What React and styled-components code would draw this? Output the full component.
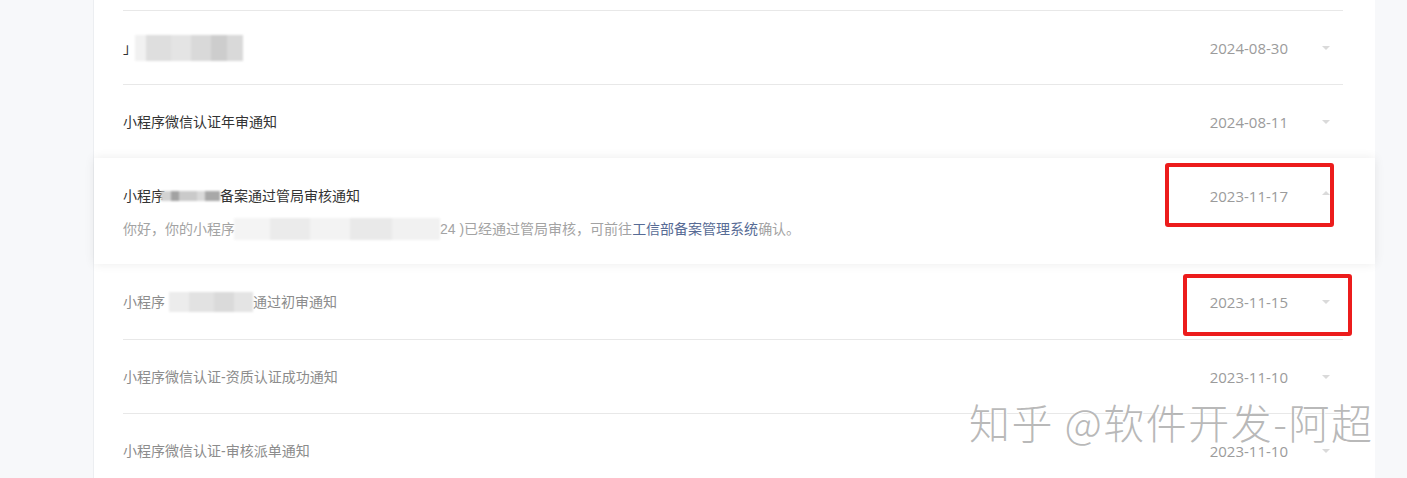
import React from "react";
import styled, { createGlobalStyle } from "styled-components";

const GlobalStyle = createGlobalStyle`
  html, body {
    margin: 0;
    padding: 0;
    background: #f7f8fa;
  }
  body {
    font-family: "Liberation Sans", "Noto Sans CJK SC", sans-serif;
    overflow: hidden;
  }
`;

const Page = styled.div`
  position: relative;
  width: 1407px;
  height: 478px;
  padding-left: 93px;
  box-sizing: border-box;
  overflow: hidden;
`;

const Panel = styled.div`
  width: 1282px;
  height: 100%;
  padding-top: 10px;
  box-sizing: border-box;
  background: #fff;
  border-left: 1px solid #eceef1;
`;

const List = styled.ul`
  list-style: none;
  margin: 0;
  padding: 0;
`;

const Item = styled.li`
  display: flex;
  align-items: center;
  height: ${(p) => p.$h || 74}px;
  margin: 0 32px 0 29px;
  box-sizing: border-box;
  border-top: ${(p) => (p.$line ? "1px solid #e8e8e8" : "none")};
`;

const ActiveItem = styled.li`
  position: relative;
  z-index: 1;
  height: 106px;
  padding: 28px 32px 26px 29px;
  box-sizing: border-box;
  background: #fff;
  box-shadow: 0 0 10px rgba(0, 0, 0, 0.08);
`;

const Head = styled.div`
  display: flex;
  align-items: center;
  height: 20px;
`;

const Title = styled.div`
  flex: 1;
  display: flex;
  align-items: center;
  font-size: 14px;
  line-height: 20px;
  color: ${(p) => (p.$read ? "#8c8c8c" : "#333")};
  white-space: nowrap;
`;

const Desc = styled.div`
  display: flex;
  align-items: center;
  margin-top: 12px;
  font-size: 14px;
  line-height: 20px;
  color: #a3a3a3;
  white-space: nowrap;
`;

const Link = styled.a`
  color: #576b95;
  text-decoration: none;
`;

const Date = styled.span`
  font-family: "Open Sans", "Liberation Sans", sans-serif;
  font-size: 15px;
  color: #9b9b9b;
`;

const Caret = styled.span`
  width: 0;
  height: 0;
  margin: 0 13px 0 34px;
  border-left: 4px solid transparent;
  border-right: 4px solid transparent;
  ${(p) =>
    p.$up
      ? "border-bottom: 4px solid #dadada; margin-top: -6px;"
      : "border-top: 4px solid #dadada;"}
`;

const Blur = styled.span`
  display: inline-block;
  width: ${(p) => p.$w}px;
  height: ${(p) => p.$h}px;
  margin-left: ${(p) => p.$ml || 0}px;
  background: ${(p) => p.$bg};
  filter: blur(0.8px);
`;

const Mark = styled.div`
  position: absolute;
  z-index: 3;
  left: 969px;
  top: 395px;
  font-family: "Noto Sans CJK SC", sans-serif;
  font-size: 41px;
  font-weight: 300;
  line-height: 52px;
  letter-spacing: 1.5px;
  color: rgba(125, 125, 125, 0.55);
  text-shadow: 1px 1px 0 rgba(255, 255, 255, 0.95), -1px 0 0 rgba(255, 255, 255, 0.5);
  white-space: nowrap;
  pointer-events: none;
`;

const RedBox = styled.div`
  position: absolute;
  z-index: 2;
  left: ${(p) => p.$x}px;
  top: ${(p) => p.$y}px;
  width: ${(p) => p.$w}px;
  height: ${(p) => p.$h}px;
  box-sizing: border-box;
  border: 4px solid #ec1c1c;
  border-radius: 3px;
`;

const mosaicTop =
  "linear-gradient(to right, #f1f1f1 0 11px, #dedede 11px 36px, #e4e4e4 36px 56px, #d9d9d9 56px 76px, #cdcdcd 76px 92px, #d9d9d9 92px 108px)";
const mosaicTitle =
  "linear-gradient(to right, #d2d2d2 0 10px, #a2a2a2 10px 18px, #cacaca 18px 36px, #d9d9d9 36px 44px, #a8a8a8 44px 59px)";
const mosaicDesc =
  "linear-gradient(to right, #f4f4f4 0 36px, #ebebeb 36px 76px, #f3f3f3 76px 116px, #e9e9e9 116px 158px, #f1f1f1 158px 206px)";
const mosaicRead =
  "linear-gradient(to right, #ececec 0 20px, #e2e2e2 20px 45px, #dadada 45px 65px, #e4e4e4 65px 84px)";

const App = () => {
  return (
    <>
      <GlobalStyle />
      <Page>
        <Panel>
          <List>
            <Item $line>
              <Title>
                」<Blur $w={108} $h={26} $ml={-2} $bg={mosaicTop} />
              </Title>
              <Date>2024-08-30</Date>
              <Caret />
            </Item>
            <Item $line>
              <Title>小程序微信认证年审通知</Title>
              <Date>2024-08-11</Date>
              <Caret />
            </Item>
            <ActiveItem>
              <Head>
                <Title>
                  小程序
                  <Blur $w={59} $h={10} $ml={-4} $bg={mosaicTitle} />
                  备案通过管局审核通知
                </Title>
                <Date>2023-11-17</Date>
                <Caret $up />
              </Head>
              <Desc>
                你好，你的小程序
                <Blur $w={206} $h={22} $ml={-1} $bg={mosaicDesc} />
                24 )已经通过管局审核，可前往
                <Link href="#">工信部备案管理系统</Link>
                确认。
              </Desc>
            </ActiveItem>
            <Item $h={75}>
              <Title $read>
                小程序
                <Blur $w={84} $h={20} $ml={4} $bg={mosaicRead} />
                通过初审通知
              </Title>
              <Date>2023-11-15</Date>
              <Caret />
            </Item>
            <Item $line>
              <Title $read>小程序微信认证-资质认证成功通知</Title>
              <Date>2023-11-10</Date>
              <Caret />
            </Item>
            <Item $line>
              <Title $read>小程序微信认证-审核派单通知</Title>
              <Date>2023-11-10</Date>
              <Caret />
            </Item>
          </List>
        </Panel>
        <RedBox $x={1165} $y={163} $w={169} $h={64} />
        <RedBox $x={1183} $y={274} $w={169} $h={62} />
        <Mark>知乎 @软件开发-阿超</Mark>
      </Page>
    </>
  );
};

export default App;
